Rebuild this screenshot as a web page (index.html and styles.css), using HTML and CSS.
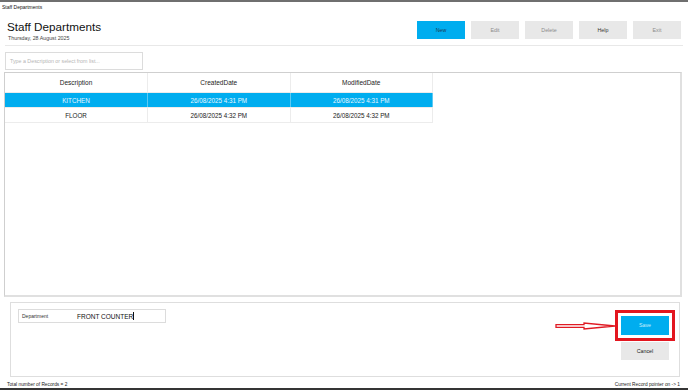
FILE: index.html
```html
<!DOCTYPE html>
<html>
<head>
<meta charset="utf-8">
<link rel="stylesheet" href="styles.css">
</head>
<body>
<div class="wintitle">Staff Departments</div>
<div class="header">
  <div class="titleblock">
    <div class="title">Staff Departments</div>
    <div class="date">Thursday, 28 August 2025</div>
  </div>
  <div class="toolbar">
    <div class="btn btn-primary">New</div>
    <div class="btn btn-muted">Edit</div>
    <div class="btn btn-muted">Delete</div>
    <div class="btn btn-dark">Help</div>
    <div class="btn btn-muted">Exit</div>
  </div>
</div>
<div class="separator"></div>
<div class="search">Type a Description or select from list...</div>
<div class="grid">
  <table class="table">
    <thead>
      <tr><th>Description</th><th>CreatedDate</th><th>ModifiedDate</th></tr>
    </thead>
    <tbody>
      <tr class="selected"><td>KITCHEN</td><td>26/08/2025 4:31 PM</td><td>26/08/2025 4:31 PM</td></tr>
      <tr><td>FLOOR</td><td>26/08/2025 4:32 PM</td><td>26/08/2025 4:32 PM</td></tr>
    </tbody>
  </table>
</div>
<div class="editpanel">
  <div class="field">
    <span class="field-label">Department</span>
    <span class="field-value">FRONT COUNTER<span class="caret"></span></span>
  </div>
  <div class="actions">
    <div class="btn btn-save">Save</div>
    <div class="btn btn-cancel">Cancel</div>
  </div>
  <svg class="arrow" width="62" height="10" viewBox="0 0 62 10">
    <polygon points="1,3.7 29,3.7 29,2 60,5 29,8 29,6.3 1,6.3" fill="#fff" stroke="#e01b24" stroke-width="1.3" stroke-linejoin="miter"/>
  </svg>
</div>
<div class="footer">
  <span>Total number of Records = 2</span>
  <span>Current Record pointer on -&gt; 1</span>
</div>
</body>
</html>
```
FILE: styles.css
```css
html, body {
  margin: 0;
  padding: 0;
}
body {
  width: 688px;
  height: 390px;
  box-sizing: border-box;
  border-top: 2px solid #6f6f6f;
  border-bottom: 2px solid #353535;
  background: #fff;
  font-family: "Liberation Sans", Arial, sans-serif;
  color: #222;
  display: flex;
  flex-direction: column;
  overflow: hidden;
}
.wintitle {
  height: 11px;
  line-height: 11px;
  font-size: 5px;
  padding-left: 2px;
  color: #111;
}
.header {
  display: flex;
  justify-content: space-between;
  align-items: flex-start;
  padding: 7px 7px 0 7px;
  height: 25px;
}
.title {
  font-size: 11.7px;
  line-height: 14px;
  color: #111;
}
.date {
  font-size: 5.3px;
  line-height: 7px;
  color: #444;
  padding-left: 1px;
  margin-top: 1px;
}
.toolbar {
  display: flex;
  gap: 6px;
  margin-top: 1px;
}
.btn {
  width: 48px;
  height: 18px;
  line-height: 18px;
  text-align: center;
  font-size: 5.3px;
  background: #e8e8e8;
  box-sizing: border-box;
}
.btn-primary {
  background: #00adef;
  color: #1d3a55;
}
.btn-muted {
  color: #8a8a8a;
}
.btn-dark {
  color: #333;
}
.separator {
  margin: 0 5px;
  border-top: 1px solid #e8e8e8;
}
.search {
  margin: 6px 0 0 5px;
  width: 138px;
  height: 18px;
  box-sizing: border-box;
  border: 1px solid #dcdcdc;
  font-size: 5.3px;
  line-height: 16px;
  padding-left: 4px;
  color: #b5b5b5;
}
.grid {
  margin: 2px 6px 0 4px;
  height: 225px;
  box-sizing: border-box;
  border: 1px solid #cfcfcf;
  border-right: 2px solid #e0e0e0;
  border-bottom: 2px solid #e0e0e0;
}
.table {
  border-collapse: collapse;
  width: 428px;
  table-layout: fixed;
}
.table th, .table td {
  text-align: center;
  border-right: 1px solid #ececec;
  border-bottom: 1px solid #ececec;
  padding: 0;
  color: #222;
}
.table th {
  height: 19px;
  font-weight: normal;
  font-size: 6.5px;
}
.table td {
  height: 14px;
  font-size: 6.3px;
}
.table tr.selected td {
  background: #00adef;
  color: #e8f7ff;
  border-right-color: #5cc9f3;
}
.editpanel {
  position: relative;
  margin: 5px 8px 0 10px;
  height: 75px;
  box-sizing: border-box;
  border: 1px solid #dedede;
  display: flex;
  justify-content: space-between;
  padding: 6px 10px 0 7px;
}
.field {
  width: 148px;
  height: 14px;
  box-sizing: border-box;
  border: 1px solid #dcdcdc;
  display: flex;
  align-items: center;
}
.field-label {
  width: 55px;
  padding-left: 3px;
  font-size: 5px;
  color: #333;
}
.field-value {
  font-size: 6.5px;
  color: #111;
  display: flex;
  align-items: center;
}
.caret {
  display: inline-block;
  width: 1px;
  height: 8px;
  background: #111;
}
.actions {
  display: flex;
  flex-direction: column;
  gap: 7px;
  padding-top: 7px;
}
.btn-save {
  height: 19px;
  line-height: 19px;
  background: #00adef;
  color: #cdeefc;
  outline: 3px solid #e3161f;
  outline-offset: 3px;
}
.btn-cancel {
  color: #222;
}
.arrow {
  position: absolute;
  left: 544px;
  top: 18px;
}
.footer {
  flex: 1;
  display: flex;
  justify-content: space-between;
  align-items: center;
  padding: 3px 8px 0 7px;
  font-size: 4.8px;
  color: #222;
}
```
